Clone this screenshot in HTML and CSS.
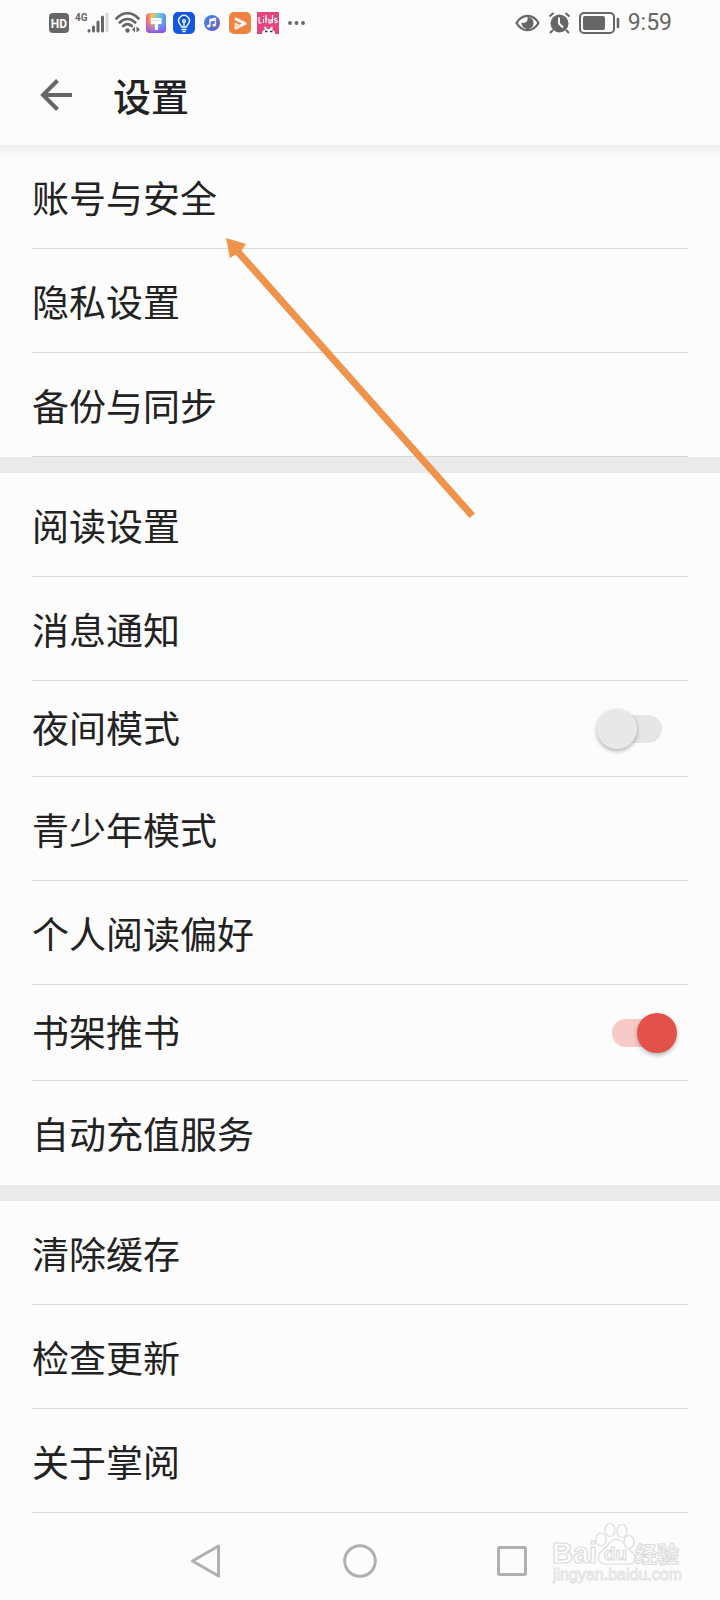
FILE: index.html
```html
<!DOCTYPE html>
<html lang="zh-CN">
<head>
    <meta charset="UTF-8">
    <meta name="viewport" content="width=device-width, initial-scale=1.0">
    <title>设置</title>
    <link rel="stylesheet" href="styles.css">
</head>
<body>
    <div class="status-bar">
        <div class="status-left">
            <svg width="20" height="22" viewBox="0 0 20 22">
                <rect x="0" y="1" width="20" height="20" rx="4" fill="#666"/>
                <text x="10" y="16" text-anchor="middle" class="hd-text">HD</text>
            </svg>
            <svg width="34" height="22" viewBox="0 0 34 22">
                <text x="0" y="9" class="net-text">4G</text>
                <g stroke="#666" stroke-width="3" stroke-linecap="round">
                    <path d="M14 18.500v.5M18.500 15v4M23 10v9M27.500 5v14"/>
                    <path d="M32 2v17" stroke="#d6d6d6"/>
                </g>
            </svg>
            <svg width="25" height="22" viewBox="0 0 25 22">
                <g fill="none" stroke="#666" stroke-width="2.600" stroke-linecap="round">
                    <path d="M1.500 6.500C8-.5 17-.5 23.500 6.500M4.800 10.500c4.500-4.600 11-4.600 15.400 0M8.200 14c2.600-2.400 6-2.400 8.600 0"/>
                </g>
                <circle cx="12.500" cy="18.500" r="2.200" fill="#666"/>
                <path d="M20 14.500v6l-3-3zM21.500 14.500v6l3.500-3z" fill="#666"/>
            </svg>
            <svg width="21" height="22" viewBox="0 0 21 22">
                <defs>
                    <linearGradient id="paint" x1="0" y1="0" x2="1" y2="0">
                        <stop offset="0" stop-color="#f45a7c"/>
                        <stop offset=".3" stop-color="#f7c35c"/>
                        <stop offset=".65" stop-color="#5fd0d8"/>
                        <stop offset="1" stop-color="#5b8df5"/>
                    </linearGradient>
                    <linearGradient id="paint-low" x1="0" y1="0" x2="0" y2="1">
                        <stop offset=".4" stop-color="#9a55f2" stop-opacity="0"/>
                        <stop offset="1" stop-color="#8a50f2"/>
                    </linearGradient>
                </defs>
                <rect x="0" y="1" width="20" height="20" rx="4" fill="url(#paint)"/>
                <rect x="0" y="1" width="20" height="20" rx="4" fill="url(#paint-low)"/>
                <path d="M5 6h10.500v6H12v6H8.800v-6H5z" fill="#fff"/>
                <path d="M5 8.500h10.500" stroke="#e6d9ee" stroke-width="1"/>
            </svg>
            <svg width="22" height="22" viewBox="0 0 22 22">
                <rect width="22" height="22" rx="5" fill="#1458da"/>
                <g fill="none" stroke="#eef6ff" stroke-width="1.400" stroke-linecap="round">
                    <path d="M8.500 15c0-2-3-3-3-6.200a5.500 5.500 0 0 1 11 0c0 3.200-3 4.200-3 6.200zM9 17.500h4M10 19.500h2M11 14.500V10"/>
                    <circle cx="11" cy="9" r="1.400"/>
                </g>
            </svg>
            <svg width="22" height="22" viewBox="0 0 22 22">
                <defs>
                    <linearGradient id="music" x1="0" y1="0" x2="1" y2="1">
                        <stop offset="0" stop-color="#3f8be0"/>
                        <stop offset="1" stop-color="#7058c8"/>
                    </linearGradient>
                </defs>
                <circle cx="11" cy="11" r="8" fill="url(#music)"/>
                <path d="M9 14V7.500l5.500-1.200V13M9 9l5.500-1.200" fill="none" stroke="#fff" stroke-width="1.300"/>
                <ellipse cx="7.700" cy="14" rx="1.800" ry="1.500" fill="#fff"/>
                <ellipse cx="13.200" cy="13" rx="1.800" ry="1.500" fill="#fff"/>
            </svg>
            <svg width="22" height="22" viewBox="0 0 22 22">
                <rect width="22" height="22" rx="5" fill="#ee823e"/>
                <path d="M7 7l9 4.500-9 4.500" fill="none" stroke="#fff" stroke-width="3" stroke-linecap="round" stroke-linejoin="round"/>
                <path d="M6.500 11.500v4.500l4-2z" fill="#ffe0c5" stroke="#ffe0c5" stroke-width="2" stroke-linejoin="round"/>
            </svg>
            <svg width="22" height="22" viewBox="0 0 22 22">
                <rect width="22" height="22" fill="#e3457f"/>
                <path d="M2 5v6h2.500M6.500 7v4M6.500 4v1M9 3v8M7.800 7h3M12 7v4h2V7M15.500 3v8M20 6.500c-3-.5-3 2-1 2s1.500 2.500-1.500 2" fill="none" stroke="#fff" stroke-width="1.200"/>
                <path d="M5 22c0-3 1-4 3-4-2-4 1-5 2-1h3c1-4 4-3 2 1 2 0 3 1 3 4z" fill="#fff"/>
                <path d="M8 19.500h2.500M13 19.500h2.500" stroke="#333" stroke-width="1.500"/>
            </svg>
            <svg width="22" height="22" viewBox="0 0 22 22" fill="#666">
                <circle cx="5" cy="11" r="1.900"/>
                <circle cx="11.500" cy="11" r="1.900"/>
                <circle cx="18" cy="11" r="1.900"/>
            </svg>
        </div>
        <div class="status-right">
            <svg width="25" height="22" viewBox="0 0 25 22">
                <path d="M1.500 11C7 1.500 18 1.500 23.500 11 18 20.500 7 20.500 1.500 11z" fill="none" stroke="#666" stroke-width="2.200"/>
                <path d="M12.500 5a6 6 0 1 1-5.900 5.300c3.200 2 6.800-.8 5.900-5.300z" fill="#666"/>
            </svg>
            <svg width="23" height="22" viewBox="0 0 23 22">
                <circle cx="11.500" cy="11.500" r="9" fill="#666"/>
                <path d="M1.500 4.500l4-3.500M21.500 4.500l-4-3.500M5 18l-3 3M18 18l3 3" stroke="#666" stroke-width="2"/>
                <path d="M11 5.500v6l4 4" fill="none" stroke="#fcfcfc" stroke-width="2"/>
            </svg>
            <svg width="41" height="24" viewBox="0 0 41 24">
                <rect x="1" y="2" width="34" height="20" rx="4" fill="none" stroke="#666" stroke-width="2"/>
                <rect x="4" y="5" width="22" height="14" rx="2" fill="#666"/>
                <path d="M39 8v8" stroke="#666" stroke-width="2.600" stroke-linecap="round"/>
            </svg>
            <span class="time">9:59</span>
        </div>
    </div>

    <header class="header">
        <button class="back-button" aria-label="返回">
            <svg width="34" height="34" viewBox="0 0 34 34" fill="none" stroke="#666" stroke-width="4">
                <path d="M18.500 2.500L4 17l14.500 14.500M4 17h29"/>
            </svg>
        </button>
        <h1>设置</h1>
    </header>

    <main class="settings">
        <div class="group">
            <a class="row" href="#">账号与安全</a>
            <a class="row" href="#">隐私设置</a>
            <a class="row" href="#">备份与同步</a>
        </div>
        <div class="group">
            <a class="row" href="#">阅读设置</a>
            <a class="row" href="#">消息通知</a>
            <label class="row switch-row"><span>夜间模式</span><input type="checkbox" class="switch"></label>
            <a class="row" href="#">青少年模式</a>
            <a class="row" href="#">个人阅读偏好</a>
            <label class="row switch-row"><span>书架推书</span><input type="checkbox" class="switch" checked></label>
            <a class="row no-line" href="#">自动充值服务</a>
        </div>
        <div class="group">
            <a class="row" href="#">清除缓存</a>
            <a class="row" href="#">检查更新</a>
            <a class="row" href="#">关于掌阅</a>
        </div>

        <!-- 指向“账号与安全”的箭头 -->
        <svg class="pointer" width="250" height="281" viewBox="0 0 250 281">
            <path d="M0 0L20 6 15.500 12.500 249 275.500 243.500 280 9.500 16.500 4 20z" fill="#f0934a"/>
        </svg>
    </main>

    <nav class="nav-bar">
        <button class="nav-button" aria-label="返回">
            <svg width="34" height="34" viewBox="0 0 34 34">
                <path d="M27.500 2v30L1.500 17z"/>
            </svg>
        </button>
        <button class="nav-button" aria-label="主页">
            <svg width="34" height="34" viewBox="0 0 34 34">
                <circle cx="17" cy="17" r="15.300"/>
            </svg>
        </button>
        <button class="nav-button" aria-label="多任务">
            <svg width="34" height="34" viewBox="0 0 34 34">
                <rect x="3.500" y="3.500" width="27" height="27" rx="1"/>
            </svg>
        </button>
    </nav>

    <!-- 水印 -->
    <svg class="watermark" width="136" height="66" viewBox="0 0 136 66">
        <g fill="#fefefe" stroke="#dcdcdc" stroke-width="1.200">
            <text x="4" y="41" class="wm-logo">Bai</text>
            <path d="M70 18.500c-6 0-8 5-11 8-4 4-8 6-7 11 1 6 6 6 10 5.500h17c4 .5 9 0 9.500-5.500.5-5-4-7-7.500-11-3-3-5-8-11-8z" transform="translate(-1.500 -1)"/>
            <ellipse cx="53" cy="17.500" rx="5" ry="6.500"/>
            <ellipse cx="62" cy="8" rx="5" ry="6.500"/>
            <ellipse cx="74" cy="9" rx="5" ry="6.500"/>
            <ellipse cx="81" cy="20" rx="5" ry="6.500"/>
            <text x="56" y="38" class="wm-du">du</text>
            <text x="87" y="40" class="wm-cn">经验</text>
        </g>
        <text x="5" y="58" class="wm-url">jingyan.baidu.com</text>
    </svg>
</body>
</html>
```
FILE: styles.css
```css
:root {
    --background-color: #fcfcfc;
    --text-color: #222;
    --icon-color: #666;
    --line-color: #d9d9d9;
    --accent-color: #e2524b;
}

* {
    box-sizing: border-box;
}

body {
    margin: 0;
    position: relative;
    min-height: 100vh;
    display: flex;
    flex-direction: column;
    background: var(--background-color);
    color: var(--text-color);
    font-family: "Noto Sans CJK SC", sans-serif;
}

button {
    border: none;
    padding: 0;
    background: none;
    cursor: pointer;
}

svg {
    display: block;
}

/* 状态栏 */
.status-bar {
    display: flex;
    justify-content: space-between;
    align-items: center;
    height: 46px;
    padding: 0 48px 0 49px;
}

.status-left {
    display: flex;
    align-items: center;
    gap: 6px;
}

.status-right {
    display: flex;
    align-items: center;
    gap: 8px;
}

.time {
    font-family: Roboto, sans-serif;
    font-size: 23px;
    line-height: 28px;
    color: var(--icon-color);
}

.hd-text {
    font: bold 12px Roboto, sans-serif;
    fill: #fff;
}

.net-text {
    font: bold 10px Roboto, sans-serif;
    fill: #666;
}

/* 标题栏 */
.header {
    display: flex;
    align-items: center;
    gap: 40px;
    height: 99px;
    padding: 0 39px 2px;
}

.header h1 {
    margin: 0;
    font-size: 38px;
    line-height: 56px;
    font-weight: 500;
}

/* 设置列表 */
.settings {
    position: relative;
    background: linear-gradient(#eee, var(--background-color) 12px);
}

.group + .group {
    border-top: 16px solid #eaeaea;
}

.row {
    display: flex;
    align-items: center;
    justify-content: space-between;
    height: 104px;
    margin: 0 32px;
    border-bottom: 1px solid var(--line-color);
    color: inherit;
    font-size: 37px;
    line-height: 54px;
    text-decoration: none;
}

.no-line {
    border-bottom: none;
}

.switch-row {
    height: 96px;
}

.switch-row span {
    padding-bottom: 4px;
}

.switch {
    appearance: none;
    width: 50px;
    height: 28px;
    margin: 0 26px;
    border-radius: 14px;
    background: #e6e6e6;
    cursor: pointer;
}

.switch::before {
    content: "";
    display: block;
    width: 40px;
    height: 40px;
    margin: -6px 0 0 -15px;
    border-radius: 50%;
    background: #e8e8e8;
    box-shadow: 0 2px 4px rgba(0, 0, 0, 0.3);
}

.switch:checked {
    background: #f7cac8;
}

.switch:checked::before {
    margin-left: 25px;
    background: var(--accent-color);
}

.pointer {
    position: absolute;
    top: 93px;
    left: 226px;
    pointer-events: none;
}

/* 底部导航 */
.nav-bar {
    display: flex;
    flex: 1;
    align-items: center;
    justify-content: center;
    gap: 118px;
    min-height: 87px;
    padding-top: 8px;
}

.nav-bar svg {
    fill: none;
    stroke: #b0b0b0;
    stroke-width: 3;
    stroke-linejoin: round;
}

.watermark {
    position: absolute;
    right: 36px;
    bottom: 12px;
    pointer-events: none;
}

.wm-logo {
    font: bold 29px "Liberation Sans", sans-serif;
}

.wm-du {
    font: bold 19px "Liberation Sans", sans-serif;
}

.wm-cn {
    font: bold 22px "Noto Sans CJK SC", sans-serif;
}

.wm-url {
    font: 16px "Liberation Sans", sans-serif;
    fill: #fefefe;
    stroke: #e4e4e4;
    stroke-width: 1;
}
```
